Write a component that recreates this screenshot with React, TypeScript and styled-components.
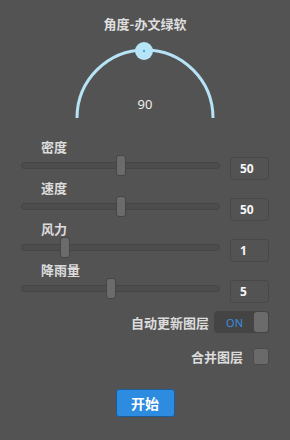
import React, { useState } from "react";
import styled, { createGlobalStyle } from "styled-components";

const GlobalStyle = createGlobalStyle`
  html, body {
    margin: 0;
    padding: 0;
    background: #535353;
  }
  body {
    font-family: "Noto Sans CJK SC", "Noto Sans", "Liberation Sans", sans-serif;
  }
`;

const Panel = styled.div`
  width: 290px;
  height: 440px;
  background: #535353;
  display: flex;
  flex-direction: column;
  box-sizing: border-box;
  padding-top: 15px;
`;

const Title = styled.div`
  height: 18px;
  line-height: 18px;
  text-align: center;
  font-size: 13px;
  font-weight: bold;
  color: #dedede;
`;

const Gauge = styled.div`
  position: relative;
  width: 150px;
  height: 83px;
  margin: 5px auto 0;
`;

const GaugeValue = styled.div`
  position: absolute;
  left: 0;
  right: 0;
  top: 57px;
  text-align: center;
  font-family: "Open Sans", "Liberation Sans", sans-serif;
  font-size: 13px;
  color: #f4f4f4;
`;

const Sliders = styled.div`
  display: flex;
  flex-direction: column;
  margin-top: 18px;
`;

const SliderBlock = styled.div`
  height: 41px;
  display: flex;
  flex-direction: column;
`;

const Label = styled.div`
  height: 16px;
  line-height: 16px;
  padding-left: 41px;
  font-size: 13px;
  font-weight: bold;
  color: #dcdcdc;
`;

const SliderRow = styled.div`
  display: flex;
  align-items: flex-start;
  padding-left: 21px;
`;

const TrackArea = styled.div`
  position: relative;
  width: 199px;
  height: 21px;
  display: flex;
  align-items: center;
`;

const Track = styled.div`
  width: 100%;
  height: 7px;
  box-sizing: border-box;
  border: 1px solid #454545;
  border-radius: 4px;
  background: #4d4d4d;
`;

const Thumb = styled.div`
  position: absolute;
  top: 0;
  width: 10px;
  height: 21px;
  box-sizing: border-box;
  border: 1px solid #454545;
  border-radius: 3px;
  background: #6b6b6b;
`;

const NumBox = styled.div`
  margin-left: 10px;
  margin-top: 2px;
  width: 39px;
  height: 23px;
  box-sizing: border-box;
  border: 1px solid #484848;
  border-radius: 3px;
  padding-left: 9px;
  line-height: 21px;
  font-family: "Open Sans", "Liberation Sans", sans-serif;
  font-size: 12px;
  font-weight: bold;
  color: #f6f6f6;
`;

const OptionRow = styled.div<{ $top: number; $gap: number }>`
  display: flex;
  justify-content: flex-end;
  align-items: center;
  gap: ${(p) => p.$gap}px;
  margin-top: ${(p) => p.$top}px;
  padding-right: 21px;
`;

const OptionLabel = styled.span`
  font-size: 13px;
  font-weight: bold;
  color: #dcdcdc;
`;

const Toggle = styled.div`
  width: 55px;
  height: 22px;
  box-sizing: border-box;
  border-radius: 4px;
  background: #444444;
  display: flex;
  align-items: center;
  padding: 1px;
`;

const ToggleText = styled.span`
  flex: 1;
  text-align: center;
  font-family: "Open Sans", "Liberation Sans", sans-serif;
  font-size: 11px;
  color: #3a8fe4;
`;

const ToggleKnob = styled.div`
  width: 14px;
  height: 20px;
  border-radius: 3px;
  background: #6b6b6b;
`;

const Checkbox = styled.div`
  width: 16px;
  height: 17px;
  box-sizing: border-box;
  border: 1px solid #4a4a4a;
  border-radius: 3px;
  background: #6a6a6a;
`;

const StartButton = styled.button`
  margin: 23px auto 0;
  width: 59px;
  height: 28px;
  box-sizing: border-box;
  border: 1px solid #1c5c9c;
  border-radius: 3px;
  background: #2d8ce0;
  color: #ffffff;
  font-family: "Noto Sans CJK SC", sans-serif;
  font-size: 14px;
  font-weight: bold;
  padding: 0;
`;

const sliders = [
  { label: "密度", value: 50, frac: 0.5 },
  { label: "速度", value: 50, frac: 0.5 },
  { label: "风力", value: 1, frac: 0.22 },
  { label: "降雨量", value: 5, frac: 0.45 },
];

export default function App() {
  const [on] = useState(true);
  return (
    <>
      <GlobalStyle />
      <Panel>
        <Title>角度-办文绿软</Title>
        <Gauge>
          <svg width="150" height="83" viewBox="0 0 150 83">
            <path
              d="M 7 80 A 68 68 0 0 1 143 80"
              fill="none"
              stroke="#b6e3f6"
              strokeWidth="3"
            />
            <circle cx="74" cy="13" r="9" fill="#b8e4f7" />
            <circle cx="74" cy="13" r="1.2" fill="#39b0e8" />
          </svg>
          <GaugeValue>90</GaugeValue>
        </Gauge>
        <Sliders>
          {sliders.map((s) => (
            <SliderBlock key={s.label}>
              <Label>{s.label}</Label>
              <SliderRow>
                <TrackArea>
                  <Track />
                  <Thumb style={{ left: s.frac * 199 - 5 }} />
                </TrackArea>
                <NumBox>{s.value}</NumBox>
              </SliderRow>
            </SliderBlock>
          ))}
        </Sliders>
        <OptionRow $top={8} $gap={5}>
          <OptionLabel>自动更新图层</OptionLabel>
          <Toggle>
            <ToggleText>{on ? "ON" : "OFF"}</ToggleText>
            <ToggleKnob />
          </Toggle>
        </OptionRow>
        <OptionRow $top={14} $gap={10}>
          <OptionLabel>合并图层</OptionLabel>
          <Checkbox />
        </OptionRow>
        <StartButton>开始</StartButton>
      </Panel>
    </>
  );
}
